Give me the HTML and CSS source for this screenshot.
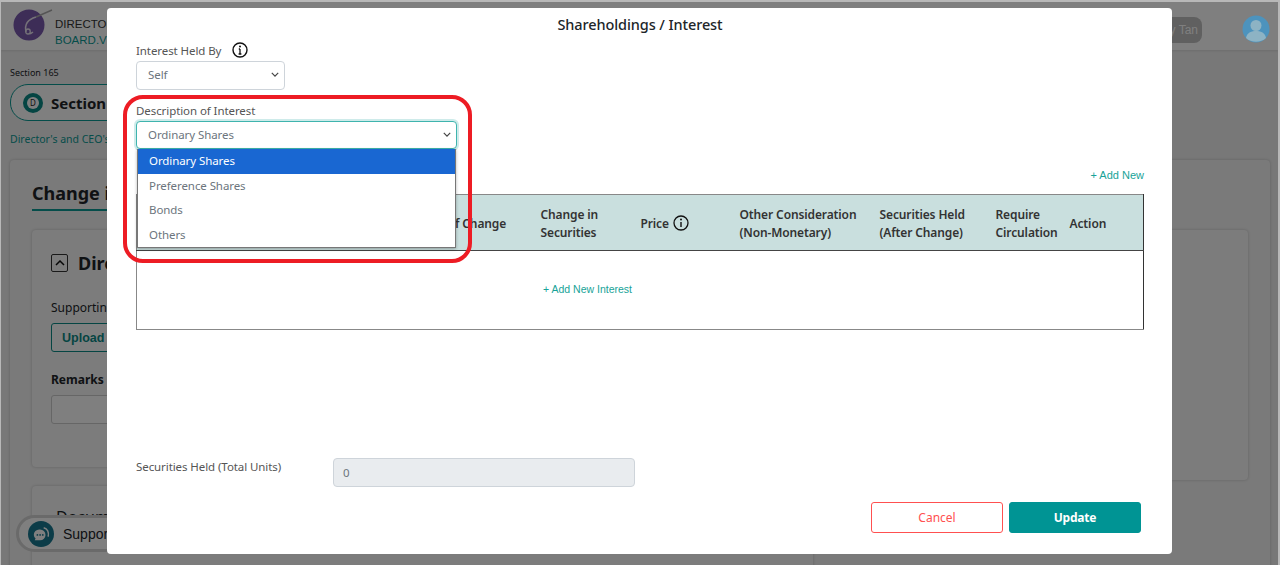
FILE: index.html
```html
<!DOCTYPE html>
<html lang="en">
<head>
    <meta charset="UTF-8">
    <meta name="viewport" content="width=device-width, initial-scale=1.0">
    <title>Shareholdings / Interest</title>
    <link rel="stylesheet" href="styles.css">
</head>
<body>
<div class="screen">

    <!-- page behind the dialog -->
    <header class="topbar">
        <svg class="logo" viewBox="0 0 40 34" width="40" height="34">
            <circle cx="16" cy="16" r="15.5" fill="#7a5aae"/>
            <path d="M23 8c-7 2-12 6-10 15" fill="none" stroke="#e8e2f0" stroke-width="1.5"/>
            <path d="M15 25c3 0 3-5 0-5s-3 5 0 5c2 0 4-1 5-2" fill="none" stroke="#e8e2f0" stroke-width="1.3"/>
            <path d="M23 8L39 1" fill="none" stroke="#aaa" stroke-width="1.4"/>
        </svg>
        <div class="brand">
            <span>DIRECTOR</span>
            <span class="brand-sub">BOARD.VISION</span>
        </div>
        <div class="user-pill">Nancy Tan</div>
        <svg class="avatar" viewBox="0 0 28 28" width="28" height="28">
            <circle cx="14" cy="14" r="13.5" fill="#4d93bd"/>
            <circle cx="14" cy="10.5" r="5.5" fill="#8db3c4"/>
            <path d="M4 23c1-6 6-7 10-7s9 1 10 7c-5 5-15 5-20 0z" fill="#8db3c4"/>
        </svg>
    </header>

    <main class="page">
        <p class="crumb">Section 165</p>
        <div class="section-pill">
            <span class="section-badge"><span>D</span></span>
            <strong>Section</strong>
        </div>
        <p class="section-note">Director's and CEO's</p>
        <section class="outer-card">
            <h2 class="change-title">Change in</h2>
            <div class="card-grid">
                <div class="left-col">
                    <div class="inner-card">
                        <h3 class="inner-title">
                            <span class="collapse-box">
                                <svg viewBox="0 0 10 6" width="10" height="6"><path d="M1 5l4-4 4 4" fill="none" stroke="#111" stroke-width="1.5"/></svg>
                            </span>
                            Dire
                        </h3>
                        <p class="support-label">Supporting</p>
                        <button class="upload-btn">Upload</button>
                        <p class="remarks-label">Remarks</p>
                        <div class="remarks-box"></div>
                    </div>
                    <div class="doc-card">
                        <p>Docume</p>
                    </div>
                </div>
                <div class="right-card"></div>
            </div>
        </section>
        <div class="support-pill">
            <span class="support-icon">
                <svg viewBox="0 0 20 20" width="18" height="18">
                    <path d="M2 11a6 6 0 0 1 6-6h1a6 6 0 0 1 0 12H3l1-2a6 6 0 0 1-2-4z" fill="#fff"/>
                    <path d="M13 3c4 1 6 5 5 10" fill="none" stroke="#fff" stroke-width="1.8"/>
                    <circle cx="6" cy="11" r="1" fill="#187890"/><circle cx="9" cy="11" r="1" fill="#187890"/><circle cx="12" cy="11" r="1" fill="#187890"/>
                </svg>
            </span>
            Support
        </div>
    </main>

    <div class="overlay"></div>

    <!-- dialog -->
    <div class="modal">
        <h1 class="modal-title">Shareholdings / Interest</h1>

        <div class="label-row">
            <label>Interest Held By</label>
            <svg class="info-icon" viewBox="0 0 16 16" width="16" height="16">
                <circle cx="8" cy="8" r="7" fill="none" stroke="#111" stroke-width="1.4"/>
                <path d="M8 7v5M6.6 12h2.8M6.8 7H8" fill="none" stroke="#111" stroke-width="1.3"/>
                <circle cx="8" cy="4.6" r="1" fill="#111"/>
            </svg>
        </div>
        <div class="select select-held">
            <span>Self</span>
            <svg class="chevron" viewBox="0 0 10 6" width="8" height="5"><path d="M1 1l4 4 4-4" fill="none" stroke="#444" stroke-width="1.5"/></svg>
        </div>

        <label class="desc-label">Description of Interest</label>
        <div class="desc-wrap">
            <div class="select select-desc">
                <span>Ordinary Shares</span>
                <svg class="chevron" viewBox="0 0 10 6" width="8" height="5"><path d="M1 1l4 4 4-4" fill="none" stroke="#444" stroke-width="1.5"/></svg>
            </div>
            <ul class="options">
                <li class="selected">Ordinary Shares</li>
                <li>Preference Shares</li>
                <li>Bonds</li>
                <li>Others</li>
            </ul>
            <div class="highlight-ring"></div>
        </div>

        <div class="add-row"><a class="add-link">+ Add New</a></div>

        <table class="interest-table">
            <thead>
                <tr>
                    <th class="col-desc"></th>
                    <th class="col-date">Date of Change</th>
                    <th class="col-change">Change in Securities</th>
                    <th class="col-price">Price
                        <svg class="info-icon price-info" viewBox="0 0 16 16" width="16" height="16">
                            <circle cx="8" cy="8" r="7" fill="none" stroke="#111" stroke-width="1.3"/>
                            <path d="M8 7v5" fill="none" stroke="#111" stroke-width="1.4"/>
                            <circle cx="8" cy="4.6" r="1" fill="#111"/>
                        </svg>
                    </th>
                    <th class="col-other">Other Consideration (Non-Monetary)</th>
                    <th class="col-held">Securities Held (After Change)</th>
                    <th class="col-circ">Require Circulation</th>
                    <th class="col-action">Action</th>
                </tr>
            </thead>
            <tbody>
                <tr>
                    <td colspan="8" class="empty-cell"><a class="add-interest">+ <span>Add New Interest</span></a></td>
                </tr>
            </tbody>
        </table>

        <div class="total-row">
            <label>Securities Held (Total Units)</label>
            <div class="total-input">0</div>
        </div>

        <div class="modal-actions">
            <button class="btn-cancel">Cancel</button>
            <button class="btn-update">Update</button>
        </div>
    </div>

</div>
</body>
</html>
```

FILE: styles.css
```css
html, body {
    margin: 0;
    padding: 0;
    height: 100%;
    overflow: hidden;
}

body {
    font-family: "Noto Sans", "Open Sans", sans-serif;
    color: #212529;
}

.screen {
    position: relative;
    height: 565px;
    box-sizing: border-box;
    border-top: 2px solid #b8b8b8;
    border-left: 1px solid #b8b8b8;
    border-right: 2px solid #b8b8b8;
    overflow: hidden;
    background-color: #f0f0f0;
}

/* page behind */
.topbar {
    display: flex;
    align-items: center;
    height: 48px;
    background-color: #fff;
    padding-left: 12px;
    padding-right: 8px;
    box-shadow: 0 1px 2px rgba(0, 0, 0, 0.1);
}

.logo {
    flex: none;
}

.brand {
    display: flex;
    flex-direction: column;
    margin-left: 2px;
    margin-top: 12px;
    font-family: "Liberation Sans", sans-serif;
    font-size: 11.5px;
    line-height: 16px;
    color: #333;
}

.brand-sub {
    color: #0b9a94;
}

.user-pill {
    margin-left: auto;
    height: 26px;
    line-height: 26px;
    padding: 0 4px 0 14px;
    background-color: #c0c0c0;
    color: #fff;
    border-radius: 8px;
    font-family: "Liberation Sans", sans-serif;
    font-size: 12px;
    margin-top: 8px;
}

.avatar {
    position: relative;
    z-index: 1;
    margin-left: 40px;
    margin-top: 5px;
}

.page {
    padding: 0 9px;
}

.crumb {
    margin: 16px 0 0 0;
    font-size: 9px;
    line-height: 13px;
}

.section-pill {
    display: flex;
    align-items: center;
    gap: 8px;
    box-sizing: border-box;
    width: 300px;
    height: 37px;
    margin-top: 5px;
    padding-left: 12px;
    border: 1px solid #0b9a94;
    border-radius: 18px;
    background-color: #fff;
    font-size: 15px;
}

.section-badge {
    display: flex;
    align-items: center;
    justify-content: center;
    width: 20px;
    height: 20px;
    border-radius: 50%;
    background-color: #0b8a86;
}

.section-badge span {
    width: 12px;
    height: 12px;
    line-height: 12px;
    border-radius: 50%;
    background-color: #fff;
    text-align: center;
    font-size: 8px;
}

.section-note {
    margin: 11px 0 0 0;
    font-size: 10.5px;
    line-height: 14px;
    color: #0b9a94;
}

.outer-card {
    margin-top: 14px;
    width: 1260px;
    height: 420px;
    padding: 20px 22px 0 22px;
    box-sizing: border-box;
    background-color: #f4f4f4;
    border-radius: 4px;
    box-shadow: 0 0 3px rgba(0, 0, 0, 0.2);
}

.change-title {
    display: inline-block;
    margin: 0;
    padding-bottom: 3px;
    font-size: 18px;
    line-height: 26px;
    border-bottom: 2px solid #0b9a94;
}

.card-grid {
    display: grid;
    grid-template-columns: 781px 430px;
    column-gap: 5px;
    align-items: start;
    margin-top: 19px;
}

.inner-card {
    height: 237px;
    box-sizing: border-box;
    padding: 22px 19px 0 19px;
    background-color: #f8f8f8;
    border-radius: 4px;
    box-shadow: 0 0 3px rgba(0, 0, 0, 0.2);
}

.right-card {
    height: 250px;
    background-color: #f8f8f8;
    border-radius: 4px;
    box-shadow: 0 0 3px rgba(0, 0, 0, 0.2);
}

.inner-title {
    display: flex;
    align-items: center;
    gap: 10px;
    margin: 0;
    font-size: 18px;
    line-height: 22px;
}

.collapse-box {
    display: flex;
    align-items: center;
    justify-content: center;
    width: 17px;
    height: 18px;
    box-sizing: border-box;
    border: 1px solid #333;
    border-radius: 2px;
}

.support-label {
    margin: 26px 0 0 0;
    font-size: 12px;
    line-height: 16px;
}

.upload-btn {
    display: block;
    width: 120px;
    height: 29px;
    margin-top: 7px;
    background-color: #fff;
    border: 1px solid #0b8a86;
    border-radius: 3px;
    color: #0b8a86;
    font-family: "Liberation Sans", sans-serif;
    font-size: 12.5px;
    font-weight: bold;
    text-align: left;
    padding-left: 10px;
}

.remarks-label {
    margin: 20px 0 0 0;
    font-size: 12px;
    line-height: 16px;
    font-weight: bold;
}

.remarks-box {
    height: 29px;
    box-sizing: border-box;
    margin-top: 7px;
    background-color: #fff;
    border: 1px solid #ccc;
    border-radius: 3px;
}

.doc-card {
    height: 90px;
    margin-top: 19px;
    padding: 20px 24px;
    box-sizing: border-box;
    background-color: #f8f8f8;
    border-radius: 4px;
    box-shadow: 0 0 3px rgba(0, 0, 0, 0.2);
}

.doc-card p {
    margin: 0;
    font-size: 16px;
}

.support-pill {
    position: absolute;
    left: 15px;
    top: 513px;
    display: flex;
    align-items: center;
    gap: 9px;
    width: 160px;
    height: 37px;
    box-sizing: border-box;
    padding-left: 9px;
    background-color: #fff;
    border: 3px solid #d4d4d4;
    border-radius: 19px;
    font-family: "Liberation Sans", sans-serif;
    font-size: 14px;
}

.support-icon {
    display: flex;
    align-items: center;
    justify-content: center;
    width: 26px;
    height: 26px;
    border-radius: 50%;
    background-color: #187890;
}

.overlay {
    position: absolute;
    top: 0;
    left: 0;
    right: 0;
    bottom: 0;
    background-color: rgba(0, 0, 0, 0.5);
}

/* dialog */
.modal {
    position: absolute;
    left: 106px;
    top: 6px;
    width: 1065px;
    height: 546px;
    box-sizing: border-box;
    padding: 0 28px 0 29px;
    background-color: #fff;
    border-radius: 4px;
    font-size: 11.5px;
    letter-spacing: -0.08px;
    color: #555;
}

.modal-title {
    margin: 0;
    padding-top: 6px;
    font-size: 14.5px;
    line-height: 20px;
    font-weight: 500;
    letter-spacing: -0.1px;
    color: #212529;
    text-align: center;
}

.label-row {
    display: flex;
    align-items: center;
    gap: 11px;
    height: 18px;
    margin-top: 7px;
}

.select {
    position: relative;
    display: flex;
    align-items: center;
    justify-content: space-between;
    box-sizing: border-box;
    padding: 0 5px 2px 11px;
    background-color: #fff;
    color: #6c757d;
}

.select-held {
    width: 149px;
    height: 29px;
    margin-top: 2px;
    border: 1px solid #ced4da;
    border-radius: 4px;
}

.desc-label {
    display: block;
    margin-top: 13px;
    line-height: 16px;
}

.desc-wrap {
    position: relative;
    width: 321px;
    margin-top: 2px;
}

.select-desc {
    height: 28px;
    border: 1px solid #3fb4ae;
    border-radius: 4px;
    box-shadow: 0 0 0 2px rgba(11, 154, 148, 0.2);
}

.options {
    position: absolute;
    left: 1px;
    top: 28px;
    z-index: 2;
    width: 319px;
    box-sizing: border-box;
    margin: 0;
    padding: 0;
    list-style: none;
    background-color: #fff;
    border: 1px solid #777;
    border-top: none;
    box-shadow: 0 1px 3px rgba(0, 0, 0, 0.3);
}

.options li {
    height: 24.5px;
    line-height: 24.5px;
    padding-left: 11px;
    color: #6c757d;
}

.options li.selected {
    background-color: #1967d2;
    color: #fff;
}

.highlight-ring {
    position: absolute;
    left: -13px;
    top: -26px;
    width: 349px;
    height: 168px;
    box-sizing: border-box;
    z-index: 3;
    border: 4px solid #ed1c24;
    border-radius: 20px;
}

.add-row {
    display: flex;
    justify-content: flex-end;
    height: 16px;
    margin-top: 18px;
    line-height: 16px;
}

.add-link {
    font-family: "Liberation Sans", sans-serif;
    font-size: 11px;
    letter-spacing: 0;
    color: #17a398;
}

.interest-table {
    width: 1007px;
    height: 135px;
    margin-top: 11px;
    border-collapse: collapse;
    table-layout: fixed;
    border: 1px solid #333;
    border-top-color: #888;
    border-bottom-color: #888;
    border-left-color: #888;
}

.interest-table th {
    height: 56px;
    box-sizing: border-box;
    padding: 3px 8px 0 8px;
    background-color: #c9dfde;
    border-bottom: 1px solid #444;
    font-size: 12px;
    line-height: 18px;
    font-weight: 600;
    letter-spacing: -0.12px;
    text-align: left;
    color: #333;
}

.col-desc { width: 273px; }
.col-date { width: 123px; }
.col-change { width: 100px; }
.col-price { width: 99px; }
.col-other { width: 140px; }
.col-held { width: 116px; }
.col-circ { width: 74px; }
.col-action { width: 82px; }

.price-info {
    vertical-align: -3px;
    margin-left: 1px;
}

.empty-cell {
    padding: 0 0 4px 406px;
    height: 79px;
    box-sizing: border-box;
}

.add-interest {
    font-family: "Liberation Sans", sans-serif;
    font-size: 10.5px;
    letter-spacing: 0;
    color: #17a398;
}

.total-row {
    display: flex;
    align-items: flex-start;
    margin-top: 128px;
}

.total-row label {
    width: 197px;
    line-height: 18px;
}

.total-input {
    width: 302px;
    height: 29px;
    box-sizing: border-box;
    padding-left: 9px;
    line-height: 27px;
    background-color: #e9ecef;
    border: 1px solid #ced4da;
    border-radius: 4px;
    color: #6c757d;
}

.modal-actions {
    display: flex;
    justify-content: flex-end;
    gap: 6px;
    margin-top: 15px;
    padding-right: 3px;
}

.modal-actions button {
    width: 132px;
    height: 31px;
    border-radius: 3px;
    font-family: inherit;
    font-size: 12px;
}

.btn-cancel {
    background-color: #fff;
    border: 1px solid #ff5050;
    color: #ff5050;
}

.btn-update {
    background-color: #009494;
    border: 1px solid #009494;
    color: #fff;
    font-weight: bold;
    letter-spacing: -0.2px;
}
```
